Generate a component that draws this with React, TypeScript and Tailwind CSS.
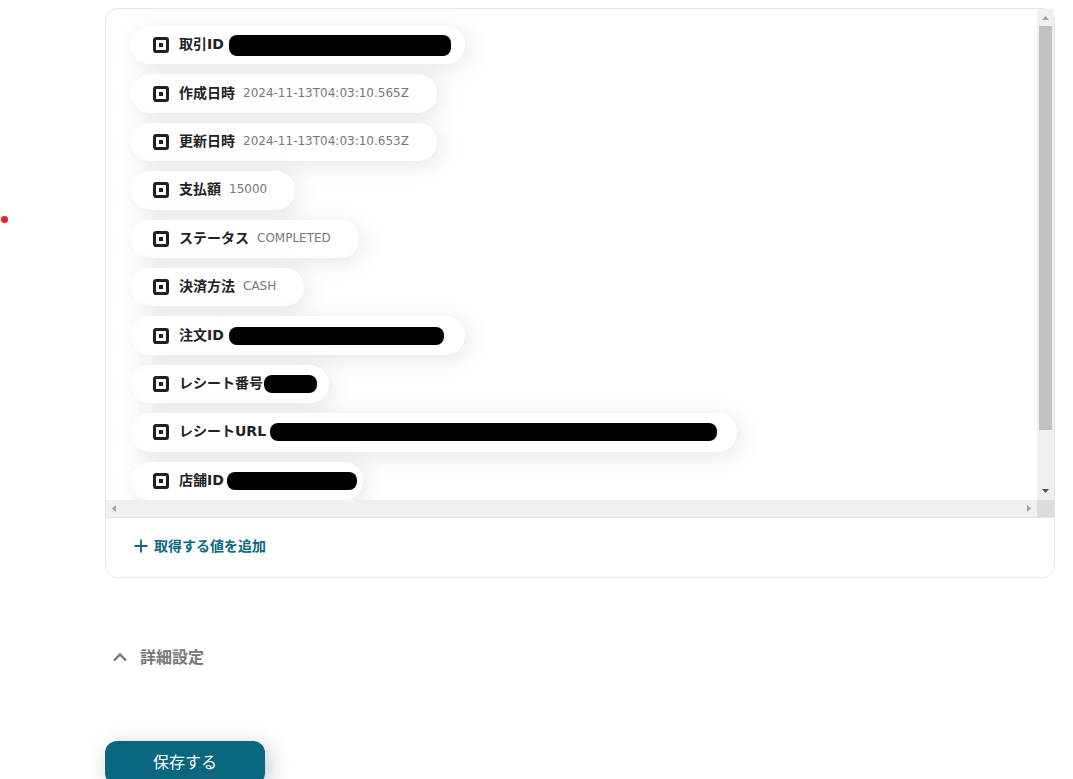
import React from "react";

interface Field {
  label: string;
  value?: string;
  // class names of the bar that hides a private value
  mask?: string;
  pill?: string;
}

const fields: Field[] = [
  { label: "取引ID", mask: "ml-[5px] w-[222px] h-[21px]", pill: "w-[334px]" },
  { label: "作成日時", value: "2024-11-13T04:03:10.565Z" },
  { label: "更新日時", value: "2024-11-13T04:03:10.653Z" },
  { label: "支払額", value: "15000" },
  { label: "ステータス", value: "COMPLETED" },
  { label: "決済方法", value: "CASH" },
  { label: "注文ID", mask: "ml-[5px] w-[215px] h-[18px]", pill: "w-[334px]" },
  { label: "レシート番号", mask: "ml-px w-[53px] h-[18px]", pill: "w-[198px]" },
  { label: "レシートURL", mask: "ml-1 w-[447px] h-[18px]", pill: "w-[606px]" },
  { label: "店舗ID", mask: "ml-[3px] w-[130px] h-[18px]", pill: "w-[232px]" },
];

const SquareIcon: React.FC = () => (
  <svg className="h-4 w-4 shrink-0" viewBox="0 0 16 16" fill="none">
    <rect x="1.5" y="1.5" width="13" height="13" rx="1.4" stroke="#231f20" strokeWidth="3" />
    <rect x="6" y="6" width="4" height="4" fill="#231f20" />
  </svg>
);

const FieldPill: React.FC<{ field: Field }> = ({ field }) => {
  return (
    <li
      className={`flex items-center justify-self-start rounded-full bg-white pl-[22px] pr-7 whitespace-nowrap shadow-[4px_4px_24px_rgba(0,0,0,0.1)] ${field.pill ?? ""}`}
    >
      <SquareIcon />
      <span className="ml-2.5 pb-0.5 text-sm font-semibold text-[#222]">{field.label}</span>
      {field.value && (
        <span className="ml-2 pb-0.5 text-xs text-[#777]">{field.value}</span>
      )}
      {field.mask && (
        <span className={`shrink-0 rounded-lg bg-black ${field.mask}`}></span>
      )}
    </li>
  );
};

const VerticalScrollbar: React.FC = () => (
  <div className="flex flex-col items-center bg-[#f0f0f0]">
    <svg className="h-[17px] w-[17px]" viewBox="0 0 17 17">
      <path d="M8.5 7L12 11H5z" fill="#a3a3a3" />
    </svg>
    <div className="h-[404px] w-[13px] bg-[#c1c1c1]"></div>
    <svg className="mt-auto h-[17px] w-[17px]" viewBox="0 0 17 17">
      <path d="M8.5 10L12 6H5z" fill="#505050" />
    </svg>
  </div>
);

const HorizontalScrollbar: React.FC = () => (
  <div className="flex justify-between bg-[#f0f0f0]">
    <svg className="h-[17px] w-[17px]" viewBox="0 0 17 17">
      <path d="M6 8.5L10 5V12z" fill="#a3a3a3" />
    </svg>
    <svg className="h-[17px] w-[17px]" viewBox="0 0 17 17">
      <path d="M11 8.5L7 5V12z" fill="#a3a3a3" />
    </svg>
  </div>
);

const App: React.FC = () => {
  return (
    <div className="relative h-screen overflow-hidden bg-white pt-2 pr-[18px] pl-[105px] font-['DejaVu_Sans','Noto_Sans_CJK_JP',sans-serif]">
      <span className="absolute top-[216px] left-px h-[7px] w-[7px] rounded-full bg-[#ed1c24]"></span>

      <section className="rounded-xl border border-[#e5e5e5]">
        <div className="grid grid-cols-[1fr_17px] border-b border-[#e5e5e5]">
          <div className="overflow-hidden rounded-tl-xl px-[25px] pt-[17px]">
            <ul className="grid h-[474px] grid-rows-10 gap-2.5">
              {fields.map((field) => (
                <FieldPill key={field.label} field={field} />
              ))}
            </ul>
          </div>
          <VerticalScrollbar />
          <HorizontalScrollbar />
          <div className="bg-[#dcdcdc]"></div>
        </div>
        <button
          type="button"
          className="flex h-[59px] items-center gap-1.5 px-7 pb-1 text-sm font-semibold text-[#0a6780]"
        >
          <svg className="h-3.5 w-3.5" viewBox="0 0 14 14" stroke="currentColor" strokeWidth="1.8">
            <path d="M7 .5v13M.5 7h13" />
          </svg>
          取得する値を追加
        </button>
      </section>

      <button
        type="button"
        className="mt-16 flex h-8 items-center gap-[13px] px-2 font-semibold text-[#777]"
      >
        <svg className="h-3.5 w-3.5" viewBox="0 0 14 14" fill="none" stroke="currentColor" strokeWidth="2.4">
          <path d="M1 9.5L7 3.5L13 9.5" />
        </svg>
        詳細設定
      </button>

      <button
        type="submit"
        className="mt-[67px] h-11 w-40 rounded-xl bg-[#0a6780] text-white shadow-[4px_4px_20px_rgba(0,40,60,0.25)]"
      >
        保存する
      </button>
    </div>
  );
};

export default App;
